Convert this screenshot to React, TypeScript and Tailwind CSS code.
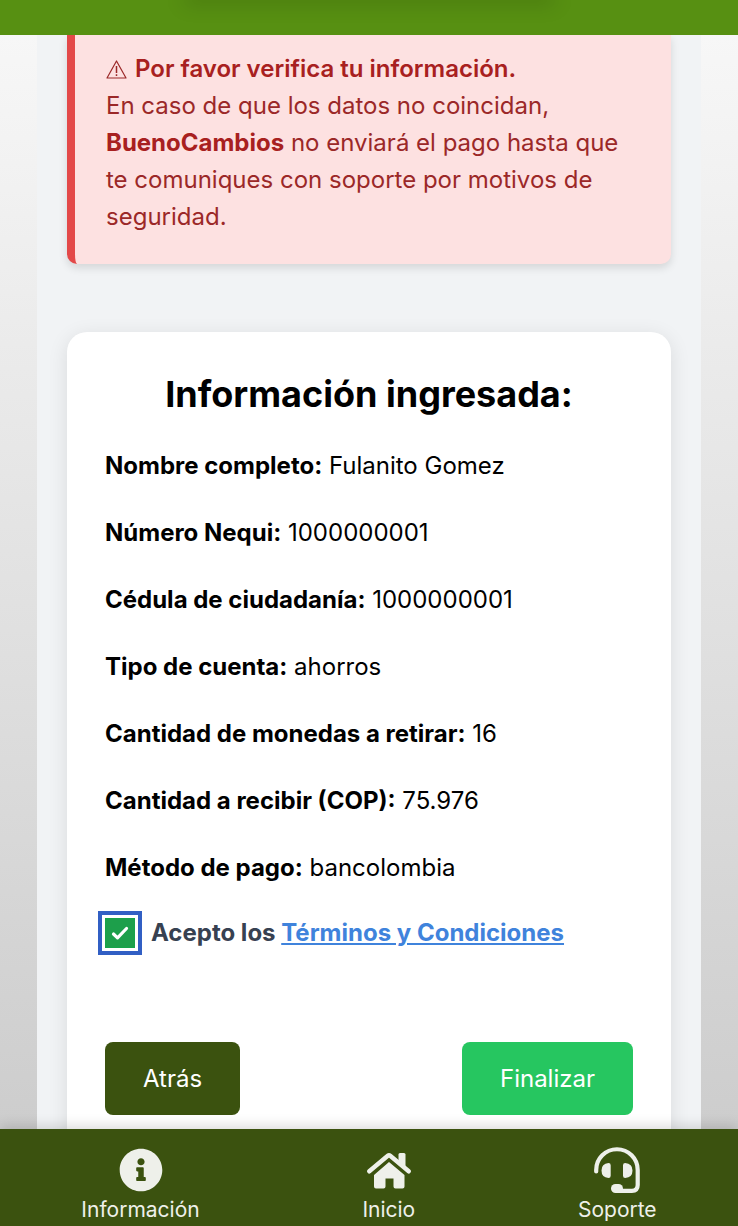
import React from "react";
import { FaInfoCircle } from "react-icons/fa";

const details = [
  { label: "Nombre completo:", value: "Fulanito Gomez" },
  { label: "Número Nequi:", value: "1000000001" },
  { label: "Cédula de ciudadanía:", value: "1000000001" },
  { label: "Tipo de cuenta:", value: "ahorros" },
  { label: "Cantidad de monedas a retirar:", value: "16" },
  { label: "Cantidad a recibir (COP):", value: "75.976" },
  { label: "Método de pago:", value: "bancolombia" },
];

function WarningIcon() {
  return (
    <svg viewBox="0 0 21 19" className="mr-2 inline-block h-[19px] w-[21px] align-[-2px]" fill="none" stroke="currentColor" aria-hidden="true">
      <path d="M10.500 1 L20 18 H1 Z" strokeWidth="1.2" strokeLinejoin="round" />
      <path d="M10.500 6 V13 M10.500 14.300 V16" strokeWidth="1.5" />
    </svg>
  );
}

function HomeIcon() {
  return (
    <svg viewBox="0 0 44 44" className="size-11" fill="currentColor" aria-hidden="true">
      <path d="M2.300 23.300 L20.800 7.800 Q22 6.800 23.200 7.800 L41.700 23.300" fill="none" stroke="currentColor" strokeWidth="4.400" strokeLinecap="round" strokeLinejoin="round" />
      <path d="M31.500 6.500 Q31.500 5 33 5 H37 Q38.500 5 38.500 6.500 V20 L31.500 14 Z" />
      <path d="M22 14 L37.500 27 V38.500 Q37.500 40.500 35.500 40.500 H28.500 Q26.500 40.500 26.500 38.500 V30.500 H18.500 V38.500 Q18.500 40.500 16.500 40.500 H9 Q7 40.500 7 38.500 V27 Z" />
    </svg>
  );
}

function HeadsetIcon() {
  return (
    <svg viewBox="0 0 46 46" className="-my-px size-[46px]" fill="none" stroke="currentColor" aria-hidden="true">
      <path d="M2.200 24.500 V23 A20.750 20.750 0 0 1 43.700 23 V38 Q43.700 43.800 37.900 43.800 H24" strokeWidth="4.200" strokeLinecap="round" />
      <path d="M14.500 16 Q16.700 16 16.700 18.200 V28.800 Q16.700 31 14.500 31 Q7.500 30.500 7.500 23.500 Q7.500 16.500 14.500 16 Z M31.200 16 Q29 16 29 18.200 V28.800 Q29 31 31.200 31 Q38.500 30.500 38.500 23.500 Q38.500 16.500 31.200 16 Z" fill="currentColor" stroke="none" />
      <rect x="17" y="37" width="12" height="9" rx="4.500" fill="currentColor" stroke="none" />
    </svg>
  );
}

export default function App() {
  return (
    <div className="flex h-screen flex-col overflow-hidden bg-white font-['Inter',sans-serif] text-2xl leading-[37px] text-black">
      <header className="h-[35px] shrink-0 overflow-hidden bg-[#579012]">
        <div className="mx-auto -mt-2 h-2 w-1/2 shadow-[0_2px_20px_rgba(0,0,0,0.25)]" />
      </header>

      <main className="min-h-0 flex-1 overflow-y-auto bg-linear-to-b from-[#f7f7f7] to-[#cdcdcd] px-[37px] [scrollbar-width:none]">
        <div className="bg-[#f1f3f5] px-[30px] pb-10">
          <section className="rounded-b-[10px] border-l-[8px] border-[#e34848] bg-[#fde1e1] pt-[15px] pr-8 pb-[29px] pl-[31px] text-[#9b2828] shadow-[0_4px_8px_rgba(0,0,0,0.12)]">
            <p>
              <WarningIcon />
              <strong className="font-semibold text-[#a82020]">Por favor verifica tu información.</strong>
              <br />
              En caso de que los datos no coincidan, <strong className="font-bold text-[#a82020]">BuenoCambios</strong> no enviará el pago hasta que te comuniques con soporte por motivos de seguridad.
            </p>
          </section>

          <section className="mt-[68px] rounded-[20px] bg-white p-[38px] shadow-[0_4px_20px_rgba(0,0,0,0.1)]">
            <h1 className="text-center text-4xl leading-12 font-bold">Información ingresada:</h1>
            <div className="mt-[29px] flex flex-col gap-[30px]">
              {details.map((item) => (
                <p key={item.label}>
                  <strong className="font-bold">{item.label}</strong> {item.value}
                </p>
              ))}
            </div>
            <div className="mt-7 flex items-center gap-4 font-bold text-[#374151]">
              <span className="relative flex size-[30px]">
                <input id="terms" type="checkbox" defaultChecked className="peer size-[30px] appearance-none border border-[#16a34a] outline-4 outline-offset-[3px] outline-[#315fc4] checked:bg-[#1d9f4b]" />
                <svg viewBox="0 0 30 30" className="pointer-events-none absolute inset-0 hidden peer-checked:block" fill="none" stroke="white" strokeWidth="3.200" strokeLinecap="round" strokeLinejoin="round" aria-hidden="true">
                  <path d="M8.500 16 L12.500 19.800 L21.500 10.500" />
                </svg>
              </span>
              <span>
                <label htmlFor="terms">Acepto los </label>
                <a href="#terminos" className="text-[#3f83dc] underline">Términos y Condiciones</a>
              </span>
            </div>
            <div className="mt-[91px] flex justify-between text-white">
              <button type="button" className="h-[73px] rounded-lg bg-[#3b520f] px-[38px]">Atrás</button>
              <button type="button" className="h-[73px] rounded-lg bg-[#26c660] px-[38px]">Finalizar</button>
            </div>
          </section>
        </div>
      </main>

      <nav className="relative flex h-[97px] shrink-0 justify-around bg-[#3b520f] pt-[19px] text-[21px] leading-6 text-[#eef0ea] shadow-[0_-3px_12px_rgba(0,0,0,0.15)]">
        <a href="#informacion" className="flex flex-col items-center gap-1.5">
          <FaInfoCircle className="size-11" aria-hidden="true" />
          Información
        </a>
        <a href="#inicio" className="flex flex-col items-center gap-1.5">
          <HomeIcon />
          Inicio
        </a>
        <a href="#soporte" className="flex flex-col items-center gap-1.5">
          <HeadsetIcon />
          Soporte
        </a>
      </nav>
    </div>
  );
}
